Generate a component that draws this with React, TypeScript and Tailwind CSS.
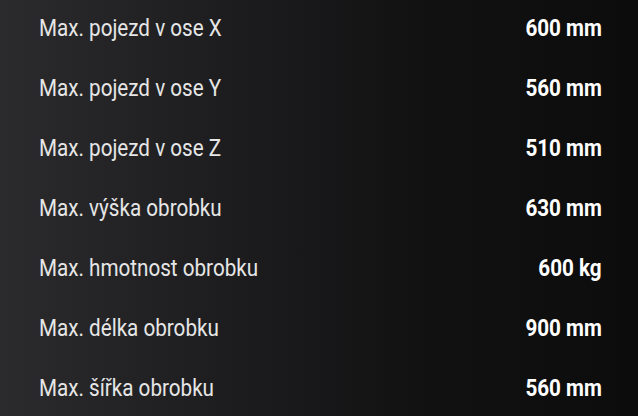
const specs = [
  { label: 'Max. pojezd v ose X', value: '600 mm' },
  { label: 'Max. pojezd v ose Y', value: '560 mm' },
  { label: 'Max. pojezd v ose Z', value: '510 mm' },
  { label: 'Max. výška obrobku', value: '630 mm' },
  { label: 'Max. hmotnost obrobku', value: '600 kg' },
  { label: 'Max. délka obrobku', value: '900 mm' },
  { label: 'Max. šířka obrobku', value: '560 mm' },
];

export default function App() {
  return (
    <div className="w-[638px] h-[416px] overflow-hidden bg-[linear-gradient(90deg,#2b2b2d_0%,#1d1d1f_35%,#121213_65%,#0c0c0c_100%)] font-['Roboto',sans-serif]">
      <div className="flex flex-col pl-[39px] pr-[36px] -mt-[2px]">
        {specs.map((s) => (
          <div key={s.label} className="h-[60px] flex items-center justify-between">
            <span className="text-[24px] text-[#e6e6e6] origin-left scale-x-[0.86] whitespace-nowrap">
              {s.label}
            </span>
            <span className="text-[24px] font-bold text-white origin-right scale-x-[0.86] whitespace-nowrap">
              {s.value}
            </span>
          </div>
        ))}
      </div>
    </div>
  );
}
